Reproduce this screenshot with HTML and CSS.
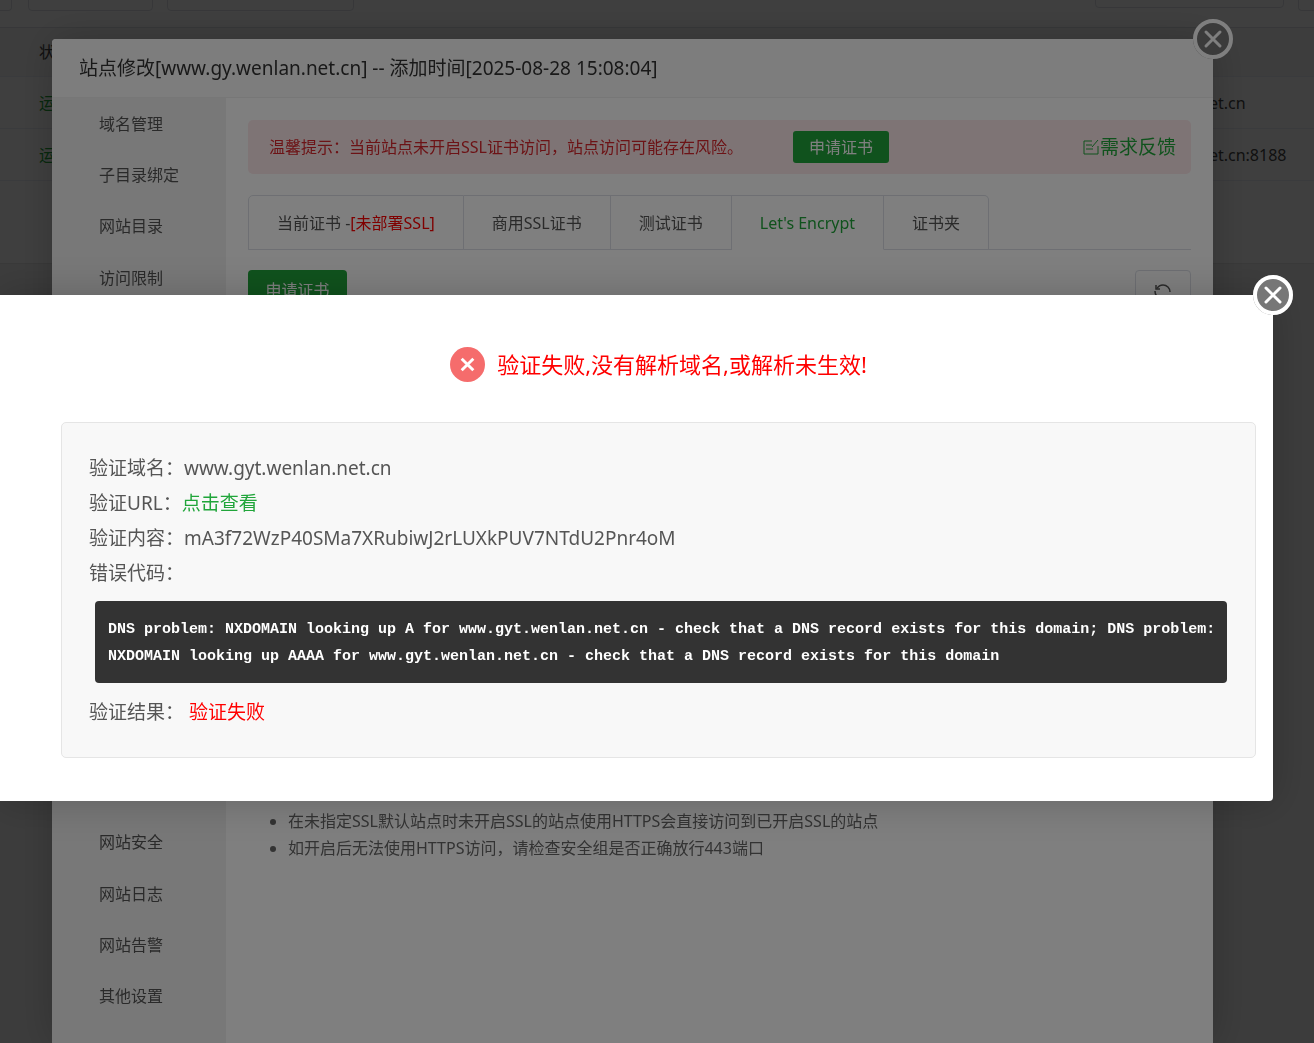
FILE: index.html
```html
<!DOCTYPE html>
<html lang="zh-CN">
<head>
<meta charset="utf-8">
<meta name="viewport" content="width=device-width, initial-scale=1">
<title>站点修改</title>
<link rel="stylesheet" href="styles.css">
</head>
<body>
<main class="page">
  <div class="toolbar">
    <button class="tool tool-cut" type="button" aria-label="添加站点"></button>
    <button class="tool tool-mid" type="button" aria-label="默认页面"></button>
    <button class="tool tool-wide" type="button" aria-label="默认站点"></button>
    <input class="tool tool-search" type="text" aria-label="搜索">
    <button class="tool tool-end" type="button" aria-label="设置"></button>
  </div>
  <table class="sites">
    <thead><tr><th>状态</th><th class="remark"></th></tr></thead>
    <tbody>
      <tr><td class="running">运行中</td><td class="remark">net.cn</td></tr>
      <tr><td class="running">运行中</td><td class="remark">net.cn:8188</td></tr>
    </tbody>
  </table>
  <div class="pager"></div>
</main>

<div class="mask mask-site">
  <section class="dialog site-dialog" role="dialog" aria-labelledby="site-title">
    <h1 class="site-title" id="site-title">站点修改[www.gy.wenlan.net.cn] -- 添加时间[2025-08-28 15:08:04]</h1>
    <button class="close" type="button" aria-label="关闭站点修改">
      <svg viewBox="0 0 40 40"><circle cx="20" cy="20" r="18"/><path d="M13 13l14 14M27 13L13 27"/></svg>
    </button>
    <div class="site-body">
      <ul class="menu">
        <li>域名管理</li>
        <li>子目录绑定</li>
        <li>网站目录</li>
        <li>访问限制</li>
        <li class="menu-gap" aria-hidden="true"></li>
        <li>网站安全</li>
        <li>网站日志</li>
        <li>网站告警</li>
        <li>其他设置</li>
      </ul>
      <div class="content">
        <div class="alert">
          <span class="alert-text">温馨提示：当前站点未开启SSL证书访问，站点访问可能存在风险。</span>
          <button class="btn btn-small" type="button">申请证书</button>
          <a class="feedback" href="#feedback">
            <svg viewBox="0 0 18 18"><path d="M10 3H2v13h14V8M4 7h6M4 11h7M10 9l6-7"/></svg>需求反馈</a>
        </div>
        <nav class="tabs">
          <button class="tab" type="button">当前证书 -<span class="unset">[未部署SSL]</span></button>
          <button class="tab" type="button">商用SSL证书</button>
          <button class="tab" type="button">测试证书</button>
          <button class="tab tab-active" type="button">Let's Encrypt</button>
          <button class="tab" type="button">证书夹</button>
        </nav>
        <div class="actions">
          <button class="btn btn-large" type="button">申请证书</button>
          <button class="refresh" type="button" aria-label="刷新">
            <svg viewBox="0 0 18 18"><path d="M3 5.500a7 7 0 0 1 6-3.500a7 7 0 0 1 7 7M1 8a8 8 0 0 0 1.500 5M15 13a7 7 0 0 1-6 3"/><path d="M2 2v4h4"/></svg>
          </button>
        </div>
        <div class="certs"></div>
        <ul class="tips">
          <li>在未指定SSL默认站点时未开启SSL的站点使用HTTPS会直接访问到已开启SSL的站点</li>
          <li>如开启后无法使用HTTPS访问，请检查安全组是否正确放行443端口</li>
        </ul>
      </div>
    </div>
  </section>
</div>

<div class="mask mask-result">
  <section class="dialog result-dialog" role="dialog" aria-labelledby="result-title">
    <button class="close" type="button" aria-label="关闭">
      <svg viewBox="0 0 40 40"><circle cx="20" cy="20" r="18"/><path d="M13 13l14 14M27 13L13 27"/></svg>
    </button>
    <h2 class="result-title" id="result-title">
      <svg class="fail-icon" viewBox="0 0 36 36"><circle cx="18" cy="18" r="18"/><path d="M12 12l12 12M24 12L12 24"/></svg>
      验证失败,没有解析域名,或解析未生效!
    </h2>
    <div class="detail">
      <p>验证域名：www.gyt.wenlan.net.cn</p>
      <p>验证URL：<a href="#check">点击查看</a></p>
      <p>验证内容：mA3f72WzP40SMa7XRubiwJ2rLUXkPUV7NTdU2Pnr4oM</p>
      <p>错误代码：</p>
      <pre class="code">DNS problem: NXDOMAIN looking up A for www.gyt.wenlan.net.cn - check that a DNS record exists for this domain; DNS problem: NXDOMAIN looking up AAAA for www.gyt.wenlan.net.cn - check that a DNS record exists for this domain</pre>
      <p>验证结果： <span class="failed">验证失败</span></p>
    </div>
  </section>
</div>
</body>
</html>
```

FILE: styles.css
```css
* { box-sizing: border-box; }
html, body { height: 100%; }
body {
  margin: 0;
  overflow: hidden;
  background: #f0f0f0;
  color: #555;
  font: 16px/24px "Noto Sans", "Noto Sans CJK SC", sans-serif;
}
button, input { font: inherit; color: inherit; }
button { cursor: pointer; }
h1, h2, p, ul, pre { margin: 0; padding: 0; font-weight: 400; }
ul { list-style: none; }
svg { fill: none; stroke: currentColor; }

/* Site list behind the dialogs */
.page { margin-top: -27px; background: #fff; }
.toolbar {
  display: flex;
  align-items: flex-end;
  gap: 14px;
  height: 54px;
  padding-bottom: 16px;
}
.tool { height: 38px; padding: 0; background: #fff; border: 1px solid #dcdfe6; border-radius: 4px; }
.tool-cut { width: 12px; margin-right: 2px; border-left: 0; border-radius: 0 4px 4px 0; }
.tool-mid { width: 125px; }
.tool-wide { width: 187px; }
.tool-search { width: 189px; margin: 0 0 3px auto; }
.tool-end { width: 16px; border-right: 0; border-radius: 4px 0 0 4px; }
.sites {
  width: 100%;
  border-top: 1px solid #dcdfe6;
  border-collapse: collapse;
  table-layout: fixed;
  color: #444;
}
.sites th, .sites td { height: 52px; padding: 0 0 0 39px; border-bottom: 1px solid #ebeef5; text-align: left; font-weight: 400; }
.sites th { height: 49px; background: #f5f5f5; }
.sites .remark { width: 154px; }
.sites .running { color: #20a53a; }
.pager { height: 83px; border-bottom: 1px solid #e4e4e4; }

/* Dialogs */
.mask { position: fixed; inset: 0; background: rgba(0, 0, 0, .5); }
.mask-site { padding: 39px 101px 0 52px; }
.mask-result { padding: 295px 41px 0 0; }
.dialog { position: relative; background: #fff; box-shadow: 1px 1px 40px rgba(0, 0, 0, .2); }
.close {
  position: absolute;
  top: -20px;
  right: -20px;
  width: 40px;
  height: 40px;
  padding: 0;
  border: 0;
  border-radius: 50%;
  background: #777;
  color: #fff;
}
.close svg { display: block; stroke-width: 3; stroke-linecap: round; }
.close circle { stroke-width: 4; }

.site-dialog { display: flex; flex-direction: column; height: 100%; border-radius: 4px 4px 0 0; }
.site-title {
  padding: 0 27px;
  border-bottom: 1px solid #eee;
  border-radius: 4px 4px 0 0;
  background: #fbfbfb;
  color: #333;
  font-size: 19px;
  line-height: 58px;
}
.site-body { display: flex; flex: 1; min-height: 0; }
.menu {
  display: grid;
  grid-template-rows: repeat(18, 1fr);
  align-items: center;
  width: 174px;
  padding: 0 0 21px 47px;
  background: #f0f0f0;
}
.menu-gap { grid-row: span 10; }
.content { flex: 1; padding: 22px; }
.alert {
  display: flex;
  align-items: center;
  height: 54px;
  margin-bottom: 21px;
  padding: 0 15px 0 21px;
  border-radius: 5px;
  background: #fde9eb;
  color: #d9262c;
}
.alert-text { width: 524px; }
.btn { border: 0; border-radius: 4px; background: #20a53a; color: #fff; }
.btn-small { width: 96px; height: 32px; padding: 0; border-radius: 3px; }
.btn-large { width: 99px; height: 40px; padding: 0; }
.feedback {
  display: flex;
  align-items: center;
  margin-left: auto;
  color: #20a53a;
  font-size: 19px;
  text-decoration: none;
}
.feedback svg { width: 18px; height: 18px; }
.tabs { display: flex; height: 55px; margin-bottom: 20px; border-bottom: 1px solid #dcdfe6; }
.tab {
  height: 55px;
  padding: 0 28px;
  border: 1px solid #dcdfe6;
  border-left: 0;
  background: #fff;
  white-space: nowrap;
}
.tab:first-child { border-left: 1px solid #dcdfe6; border-top-left-radius: 5px; }
.tab:last-child { border-top-right-radius: 5px; }
.tab-active { border-bottom-color: #fff; color: #20a53a; }
.unset, .failed { color: #f00; }
.actions { display: flex; justify-content: space-between; }
.refresh { width: 56px; height: 40px; padding: 0; border: 1px solid #dcdfe6; border-radius: 4px; background: #fff; }
.refresh svg { width: 18px; height: 18px; vertical-align: middle; stroke-width: 1.5; }
.certs { height: 498px; }
.tips { padding-left: 40px; list-style: disc; line-height: 27px; color: #666; }

.result-dialog { padding: 52px 17px 43px 61px; border-radius: 0 4px 4px 0; }
.result-title {
  display: flex;
  align-items: center;
  justify-content: center;
  gap: 12px;
  margin-bottom: 40px;
  color: #f00;
  font-size: 22px;
  line-height: 35px;
}
.fail-icon { width: 35px; height: 35px; stroke: #fff; stroke-width: 3; }
.fail-icon circle { fill: #f56c6c; stroke: none; }
.detail {
  padding: 28px 28px 27px 27px;
  border: 1px solid #e5e5e5;
  border-radius: 5px;
  background: #f8f8f8;
  font-size: 19px;
  line-height: 35px;
}
.detail a { color: #20a53a; text-decoration: none; }
.code {
  margin: 10px 0 12px 6px;
  padding: 15px 8px 13px 13px;
  border-radius: 4px;
  background: #333;
  color: #fff;
  font: 700 15px/27px "Liberation Mono", monospace;
  white-space: pre-wrap;
}
```
